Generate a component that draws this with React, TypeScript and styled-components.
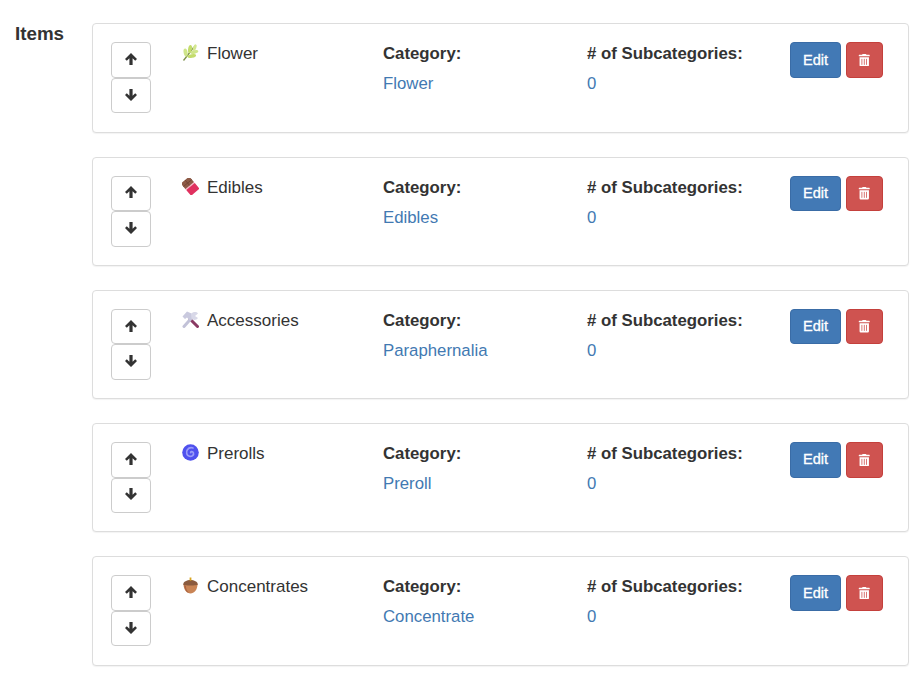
import React from "react";
import styled, { createGlobalStyle } from "styled-components";
import { FaTrashAlt } from "react-icons/fa";

const GlobalStyle = createGlobalStyle`
  html, body {
    margin: 0;
    background: #fff;
    color: #333;
    font-family: "Liberation Sans", Arial, sans-serif;
    font-size: 16.8px;
    overflow: hidden;
  }
`;

const Page = styled.div`
  display: flex;
  width: 917px;
  height: 674px;
  overflow: hidden;
  box-sizing: border-box;
  padding: 23.4px 8px 0 15px;
`;

const SectionLabel = styled.div`
  width: 77px;
  flex: none;
  font-size: 18.8px;
  font-weight: 700;
  line-height: 21px;
`;

const List = styled.div`
  flex: 1;
  display: flex;
  flex-direction: column;
  gap: 24px;
`;

const Card = styled.div`
  box-sizing: border-box;
  height: 109.25px;
  padding: 18px 25px 0 18px;
  display: flex;
  background: #fff;
  border: 1px solid #ddd;
  border-radius: 4px;
  box-shadow: 0 1px 1px rgba(0, 0, 0, 0.05);
`;

const MoveButtons = styled.div`
  width: 40px;
  flex: none;
  margin-right: 31px;
  display: flex;
  flex-direction: column;
`;

const MoveButton = styled.button`
  box-sizing: border-box;
  width: 40px;
  height: 35.5px;
  padding: 0 0 2px;
  display: flex;
  align-items: center;
  justify-content: center;
  background: #fff;
  border: 1px solid #ccc;
  border-radius: 4px;
  color: #333;
`;

const ArrowIcon = styled.svg<{ $down?: boolean }>`
  width: 12px;
  height: 12px;
  fill: currentColor;
  transform: ${(p) => (p.$down ? "rotate(180deg)" : "none")};
`;

const NameCol = styled.div`
  width: 201px;
  flex: none;
  display: flex;
  align-items: flex-start;
  gap: 8px;
  line-height: 22px;
  padding-top: 1px;
  font-size: 17px;
`;

const Emoji = styled.svg`
  width: 17px;
  height: 17px;
  flex: none;
  margin-top: 1px;
`;

const InfoCol = styled.div<{ $width: number }>`
  width: ${(p) => p.$width}px;
  flex: none;
  line-height: 22px;
  padding-top: 1px;
`;

const InfoLabel = styled.div`
  font-weight: 700;
  margin-bottom: 8px;
`;

const InfoValue = styled.div`
  color: #4279b2;
`;

const Actions = styled.div`
  display: flex;
  gap: 5px;
  align-items: flex-start;
`;

const EditButton = styled.button`
  box-sizing: border-box;
  width: 51px;
  height: 35.5px;
  padding: 0 0 1px;
  background: #4279b5;
  border: 1px solid #3a6ca6;
  border-radius: 4px;
  color: #fff;
  font-family: inherit;
  font-size: 14.6px;
  -webkit-text-stroke: 0.3px #fff;
`;

const DeleteButton = styled.button`
  box-sizing: border-box;
  width: 37px;
  height: 35.5px;
  padding: 0;
  display: flex;
  align-items: center;
  justify-content: center;
  background: #cf5350;
  border: 1px solid #c4403c;
  border-radius: 4px;
  color: #fff;
  font-size: 12.5px;
`;

const Arrow = ({ down }: { down?: boolean }) => (
  <ArrowIcon viewBox="0 0 12 12" $down={down}>
    <path d="M6 0 L12 6 L10.2 7.8 L7.6 5.2 V12 H4.4 V5.2 L1.8 7.8 L0 6 Z" />
  </ArrowIcon>
);

const LeafIcon = () => (
  <Emoji viewBox="0 0 17 17">
    <path d="M1.5 16.5 L12 3" stroke="#7d8f4a" strokeWidth="1.3" fill="none" />
    <ellipse cx="3.6" cy="8.5" rx="2" ry="4" fill="#cfe58a" transform="rotate(-10 3.6 8.5)" />
    <ellipse cx="8" cy="5" rx="1.9" ry="4" fill="#c3dc6c" transform="rotate(10 8 5)" />
    <ellipse cx="12.7" cy="3.6" rx="1.6" ry="3.4" fill="#d3e78f" transform="rotate(20 12.7 3.6)" />
    <ellipse cx="12.4" cy="8" rx="4" ry="1.7" fill="#cfe58a" transform="rotate(-15 12.4 8)" />
    <ellipse cx="9.8" cy="12" rx="4.4" ry="1.9" fill="#c3dc6c" transform="rotate(-10 9.8 12)" />
  </Emoji>
);

const ChocolateIcon = () => (
  <Emoji viewBox="0 0 17 17">
    <g transform="rotate(-40 8.5 8.5)">
      <rect x="3" y="0" width="11" height="8" rx="1" fill="#8d5a46" />
      <path d="M3 4H14M8.5 0V8" stroke="#6f4232" strokeWidth="0.8" />
      <rect x="3" y="8" width="11" height="8" rx="1" fill="#e0315f" />
      <rect x="3" y="7.2" width="11" height="1.4" fill="#f2b8c4" />
    </g>
  </Emoji>
);

const ToolsIcon = () => (
  <Emoji viewBox="0 0 17 17">
    <path d="M15.5 15.5 L8 8" stroke="#8a3a63" strokeWidth="3" strokeLinecap="round" />
    <path d="M2 15.5 L10 6.5" stroke="#c2c2d8" strokeWidth="3" strokeLinecap="round" />
    <path d="M0.5 5.5 L5 0.5 L9.5 2.5 L11.5 6 L8 9.5 L5 6.5 L3 8 Z" fill="#c9c9de" />
    <path d="M9 3 C11 0.5 14.5 0.5 16 2.5 L13 5 L16 7 C14.5 9.5 11 9.5 9.5 7.5 Z" fill="#d8d8e8" />
  </Emoji>
);

const SpiralIcon = () => (
  <Emoji viewBox="0 0 17 17">
    <circle cx="8.5" cy="8.5" r="8.3" fill="#4f51ee" />
    <path
      d="M8.8 8.6 C8 7.8 10.6 6.8 11.4 8.8 C12.2 11 9.8 12.9 7.4 12.3 C4.6 11.5 3.8 8.2 5.4 5.8 C6.6 4 9 3.4 11 4"
      fill="none"
      stroke="#9a9cf8"
      strokeWidth="1.7"
      strokeLinecap="round"
    />
  </Emoji>
);

const AcornIcon = () => (
  <Emoji viewBox="0 0 17 17">
    <path d="M1.5 7 C1.5 13 5 16.5 8.5 16.5 C12 16.5 15.5 13 15.5 7 Z" fill="#c98455" />
    <path d="M4 9 C4 13 6 15.5 8 16 L5 15.3 C3 13 2.2 10 2.2 8 Z" fill="#ab6340" />
    <path d="M1.2 7.5 C1.2 4.5 5 3 8.5 3 C12 3 15.8 4.5 15.8 7.5 C15.8 8.8 1.2 8.8 1.2 7.5 Z" fill="#8a5a3e" />
    <rect x="7.6" y="0.5" width="1.8" height="3.2" fill="#d9a520" />
  </Emoji>
);

const items = [
  { name: "Flower", category: "Flower", icon: <LeafIcon /> },
  { name: "Edibles", category: "Edibles", icon: <ChocolateIcon /> },
  { name: "Accessories", category: "Paraphernalia", icon: <ToolsIcon /> },
  { name: "Prerolls", category: "Preroll", icon: <SpiralIcon /> },
  { name: "Concentrates", category: "Concentrate", icon: <AcornIcon /> },
];

const App = () => (
  <>
    <GlobalStyle />
    <Page>
      <SectionLabel>Items</SectionLabel>
      <List>
        {items.map((item) => (
          <Card key={item.name}>
            <MoveButtons>
              <MoveButton aria-label="Move up">
                <Arrow />
              </MoveButton>
              <MoveButton aria-label="Move down">
                <Arrow down />
              </MoveButton>
            </MoveButtons>
            <NameCol>
              {item.icon}
              <span>{item.name}</span>
            </NameCol>
            <InfoCol $width={204}>
              <InfoLabel>Category:</InfoLabel>
              <InfoValue>{item.category}</InfoValue>
            </InfoCol>
            <InfoCol $width={203}>
              <InfoLabel># of Subcategories:</InfoLabel>
              <InfoValue>0</InfoValue>
            </InfoCol>
            <Actions>
              <EditButton>Edit</EditButton>
              <DeleteButton aria-label="Delete">
                <FaTrashAlt />
              </DeleteButton>
            </Actions>
          </Card>
        ))}
      </List>
    </Page>
  </>
);

export default App;
